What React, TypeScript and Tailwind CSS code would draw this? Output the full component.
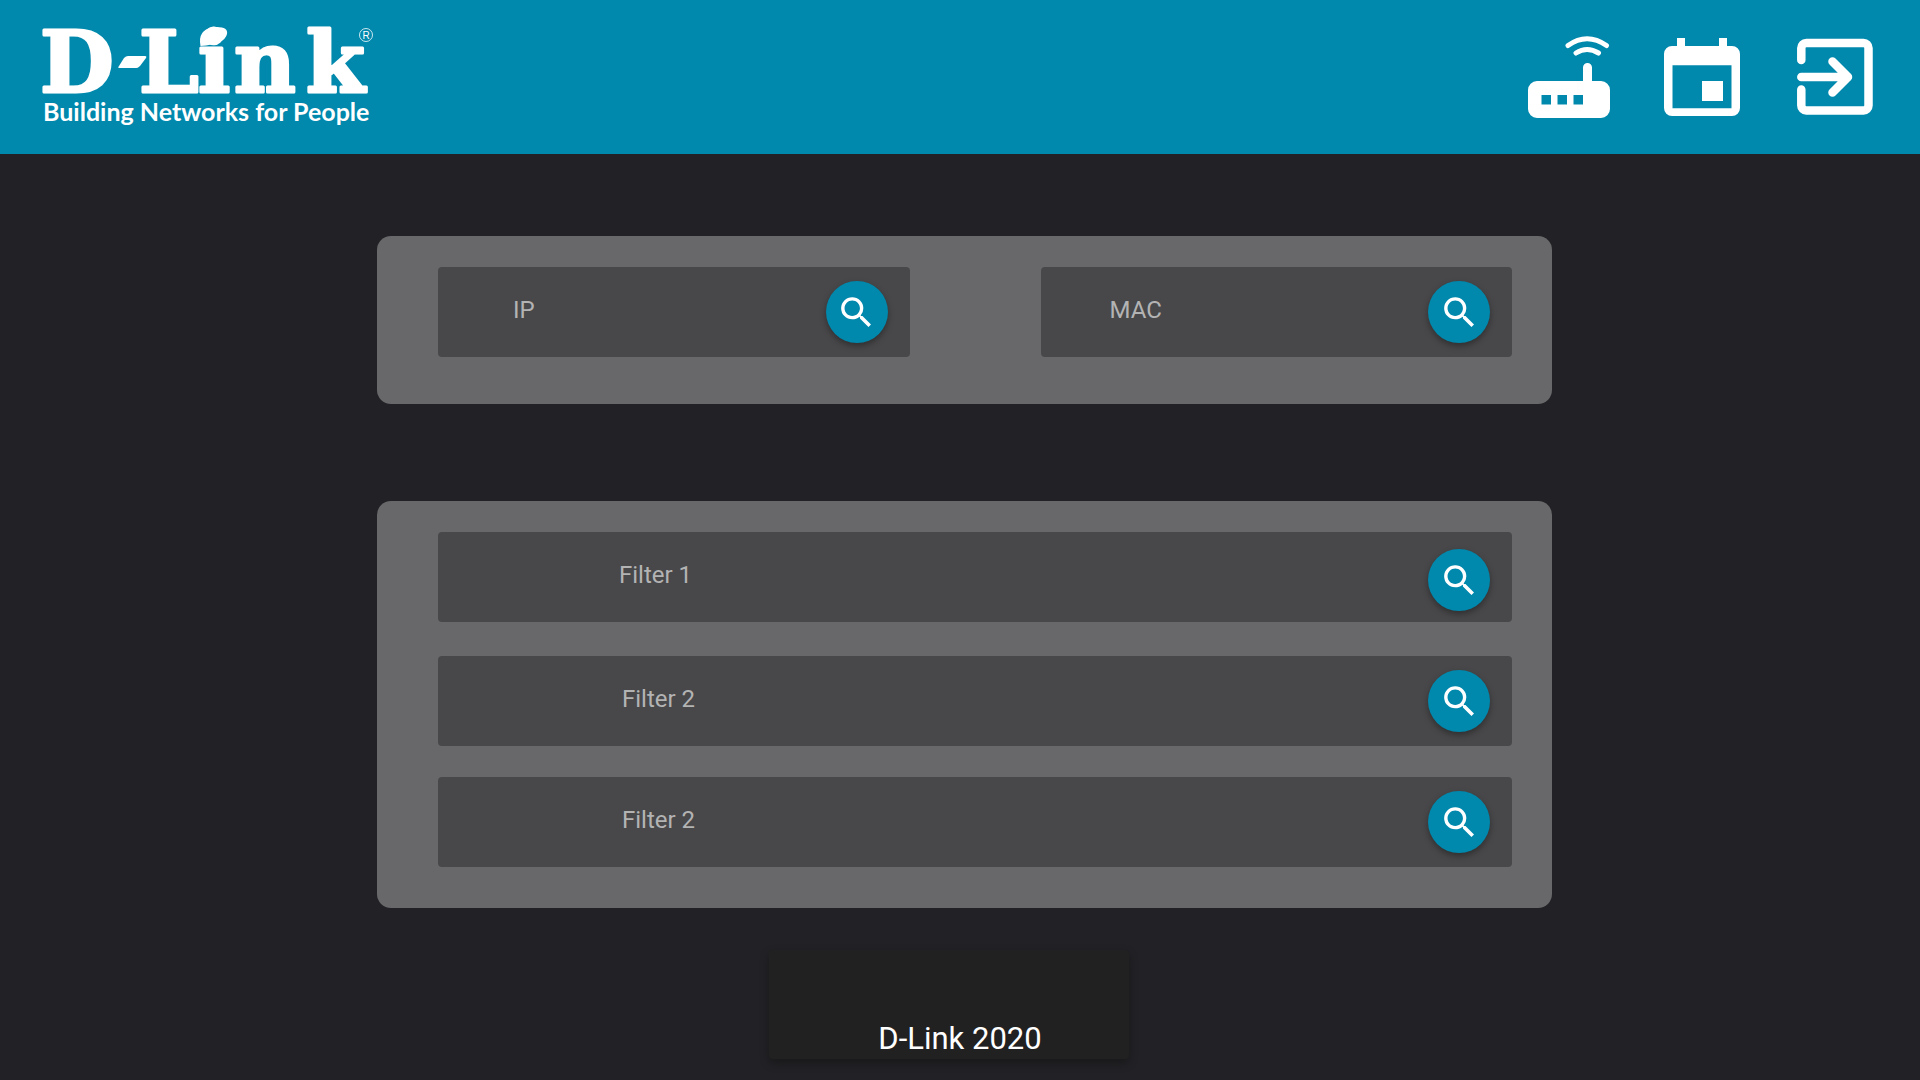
import React from 'react';

type SearchFieldProps = {
  id: string;
  label: string;
  className: string;
  labelClassName: string;
  buttonClassName?: string;
};

function Logo() {
  return (
    <svg viewBox="0 0 340 108" className="h-[108px] w-[340px] overflow-visible" fill="#fff" role="img" aria-label="D-Link, Building Networks for People">
      <text y="69" fontFamily="'DejaVu Serif', serif" fontWeight="700" fontSize="85" stroke="#fff" strokeWidth="3" strokeLinejoin="round">
        <tspan x="-2">D</tspan>
        <tspan x="82" y="50" fontSize="36">-</tspan>
        <tspan x="97 156 192 264" y="69">Link</tspan>
      </text>
      <path d="M86 33h17q2 0 1 2l-6 8q-2 2-4 2H78q-3 0-1-2l5-8q2-2 4-2z" />
      <path d="M158.500 23q-3-16 12-18.700q16-1.500 14.500 6.700-2 10-26.500 12z" />
      <text x="1" y="98" fontFamily="Lato, sans-serif" fontWeight="700" fontSize="25">
        Building Networks for People
      </text>
      <circle cx="324" cy="12" r="6.500" fill="none" stroke="#fff" strokeWidth="0.8" />
      <text x="324" y="15.500" textAnchor="middle" fontFamily="'Liberation Sans', sans-serif" fontSize="10">
        R
      </text>
    </svg>
  );
}

function RouterIcon() {
  return (
    <svg viewBox="0 0 82 82" className="size-[82px]" aria-hidden="true">
      <path
        fill="#fff"
        fillRule="evenodd"
        d="M9 45H55V31.500a4.500 4.500 0 0 1 9 0V45h9a9 9 0 0 1 9 9v19a9 9 0 0 1-9 9H9a9 9 0 0 1-9-9V54a9 9 0 0 1 9-9zM13.500 59v9.500H23V59zM29.500 59v9.500H39V59zM45.500 59v9.500H55V59z"
      />
      <path fill="none" stroke="#fff" strokeWidth="5" strokeLinecap="round" d="M40 9.500q19-13.500 38.500 0M48 17q11-7 22.500 0" />
    </svg>
  );
}

function CalendarIcon() {
  return (
    <svg viewBox="0 0 82 82" className="size-[82px]" aria-hidden="true">
      <path
        fill="#fff"
        fillRule="evenodd"
        d="M16 2h8v8h34V2h8v8h5a8 8 0 0 1 8 8v54a8 8 0 0 1-8 8H11a8 8 0 0 1-8-8V18a8 8 0 0 1 8-8h5zM11.500 29.300v43h59v-43z"
      />
      <path fill="#fff" d="M41 45h21v20H41z" />
    </svg>
  );
}

function ExitIcon() {
  return (
    <svg viewBox="0 0 82 82" className="size-[82px]" fill="none" stroke="#fff" strokeWidth="8.500" strokeLinecap="round" aria-hidden="true">
      <path d="M7.300 24V12a5 5 0 0 1 5-5H69.500a5 5 0 0 1 5 5V69.500a5 5 0 0 1-5 5H12.300a5 5 0 0 1-5-5V53.500M7.300 41H51M38.500 25.500L54 41L38.500 56.500" strokeLinejoin="round" />
    </svg>
  );
}

function SearchIcon() {
  return (
    <svg viewBox="0 0 24 24" className="size-[41px]" fill="#fff" aria-hidden="true">
      <path d="M15.500 14h-.79l-.28-.27A6.471 6.471 0 0 0 16 9.500 6.500 6.500 0 1 0 9.500 16c1.610 0 3.090-.59 4.230-1.570l.27.28v.79l5 4.990L20.490 19l-4.990-5zm-6 0C7.010 14 5 11.990 5 9.500S7.010 5 9.500 5 14 7.010 14 9.500 11.990 14 9.500 14z" />
    </svg>
  );
}

function SearchField({ id, label, className, labelClassName, buttonClassName = '' }: SearchFieldProps) {
  return (
    <div className={`flex h-[90px] min-w-0 items-center rounded-[4px] bg-[#48484a] pr-[22px] ${className}`}>
      <label htmlFor={id} className={`shrink-0 pr-4 pb-[5px] text-[24px] leading-[32px] text-[#b3b3b4] ${labelClassName}`}>
        {label}
      </label>
      <input id={id} type="text" className="h-full min-w-0 flex-1 bg-transparent pb-[5px] text-[24px] text-white outline-none" />
      <button
        type="button"
        aria-label={`Search ${label}`}
        className={`flex size-[62px] shrink-0 items-center justify-center rounded-full bg-[#0088ad] shadow-[0_3px_6px_rgba(0,0,0,0.35)] ${buttonClassName}`}
      >
        <SearchIcon />
      </button>
    </div>
  );
}

export default function App() {
  return (
    <div className="flex min-h-screen flex-col bg-[#222226] font-[Roboto,sans-serif]">
      <header className="flex h-[154px] items-center justify-between bg-[#0088ad] pr-[44px] pl-[42px]">
        <a href="#home">
          <Logo />
        </a>
        <nav className="flex gap-[51px]">
          <a href="#devices" aria-label="Devices">
            <RouterIcon />
          </a>
          <a href="#calendar" aria-label="Calendar">
            <CalendarIcon />
          </a>
          <a href="#exit" aria-label="Exit">
            <ExitIcon />
          </a>
        </nav>
      </header>

      <main className="flex flex-col gap-[97px] pt-[82px] pr-[368px] pl-[377px]">
        <section className="flex gap-[131px] rounded-[14px] bg-[#68686a] pt-[31px] pr-[40px] pb-[47px] pl-[61px]">
          <SearchField id="ip" label="IP" className="flex-1" labelClassName="pl-[75px]" />
          <SearchField id="mac" label="MAC" className="flex-1" labelClassName="pl-[69px]" />
        </section>
        <section className="flex flex-col rounded-[14px] bg-[#68686a] pt-[31px] pr-[40px] pb-[41px] pl-[61px]">
          <SearchField id="filter-1" label="Filter 1" className="mb-[34px]" labelClassName="pl-[181px]" buttonClassName="mt-[6px]" />
          <SearchField id="filter-2" label="Filter 2" className="mb-[31px]" labelClassName="pl-[184px]" />
          <SearchField id="filter-3" label="Filter 2" className="" labelClassName="pl-[184px]" />
        </section>
      </main>

      <footer className="flex justify-center pt-[42px] pr-[22px]">
        <div className="flex h-[109px] w-[360px] items-end justify-center rounded-[4px] bg-[#212121] pb-[3px] pl-[22px] text-[31px] leading-[34px] text-white shadow-[0_4px_10px_rgba(0,0,0,0.3)]">
          D-Link 2020
        </div>
      </footer>
    </div>
  );
}
